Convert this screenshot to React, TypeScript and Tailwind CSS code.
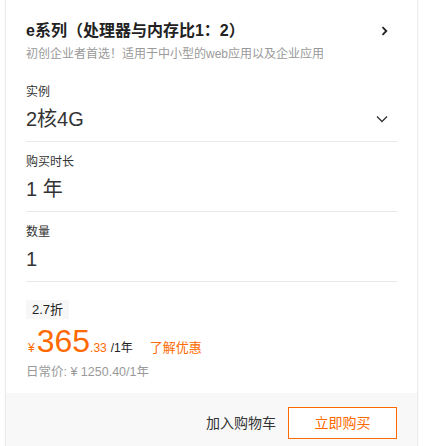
const font = { fontFamily: '"Liberation Sans", "Noto Sans CJK SC", sans-serif' };

const Field = ({ label, value, select }: { label: string; value: string; select?: boolean }) => (
  <div className="pt-[12px] pb-[8px] border-b border-[#e8e8e8]">
    <div className="h-[16px] text-xs leading-[16px] text-[#333]">{label}</div>
    <div className="mt-[5px] h-[28px] flex items-center justify-between">
      <span className="h-[28px] text-[20px] leading-[28px] text-[#333]">{value}</span>
      {select && (
        <svg width="12" height="8" viewBox="0 0 12 8" className="mr-[9px]">
          <path d="M1 1.5 L6 6.5 L11 1.5" fill="none" stroke="#333" strokeWidth="1.3" />
        </svg>
      )}
    </div>
  </div>
);

export default function App() {
  return (
    <div className="min-h-[446px] bg-white px-[6px]" style={font}>
      <div className="bg-white shadow-[0_0_2px_rgba(0,0,0,0.25)] min-h-[460px] flex flex-col">
        <div className="px-[20px]">
          <div className="pt-[19px] pb-[9px]">
            <div className="h-[24px] flex items-center justify-between">
              <h2 className="h-[24px] text-base leading-[24px] font-bold text-[#222]">e系列（处理器与内存比1：2）</h2>
              <svg width="7" height="10" viewBox="0 0 7 10" className="mr-[9px]">
                <path d="M1.5 1.2 L5.3 5 L1.5 8.8" fill="none" stroke="#222" strokeWidth="1.8" />
              </svg>
            </div>
            <p className="mt-[2px] h-[18px] text-xs leading-[18px] text-[#999]">初创企业者首选！适用于中小型的web应用以及企业应用</p>
          </div>

          <Field label="实例" value="2核4G" select />
          <Field label="购买时长" value="1 年" />
          <Field label="数量" value="1" />

          <div className="pt-[18px] pb-[11px]">
            <div className="flex h-[19px]">
              <span className="h-[19px] bg-[#f7f7f7] px-[6px] text-[13px] leading-[19px] text-[#222]">2.7折</span>
            </div>
            <div className="mt-[4px] h-[36px] flex items-baseline">
              <span className="text-xs leading-[16px] text-[#ff6a00] ml-[2px]">¥</span>
              <span className="text-[32px] leading-[36px] text-[#ff6a00] ml-[2px]">365</span>
              <span className="text-xs leading-[16px] text-[#ff6a00]">.33</span>
              <span className="text-xs leading-[16px] text-[#222] ml-[4px]">/1年</span>
              <span className="text-[13px] leading-[16px] text-[#ff6a00] ml-[17px]">了解优惠</span>
            </div>
            <div className="mt-[3px] h-[20px] text-[12.5px] leading-[20px] text-[#999]">日常价: ¥ 1250.40/1年</div>
          </div>
        </div>

        <div className="flex-1 bg-[#f8f8f8] px-[20px] pt-[14px] flex justify-end items-start gap-[12px]">
          <button className="h-[32px] text-sm text-[#333]">加入购物车</button>
          <button className="h-[32px] w-[109px] border border-[#ff6a00] text-sm text-[#ff6a00] bg-white">立即购买</button>
        </div>
      </div>
    </div>
  );
}
